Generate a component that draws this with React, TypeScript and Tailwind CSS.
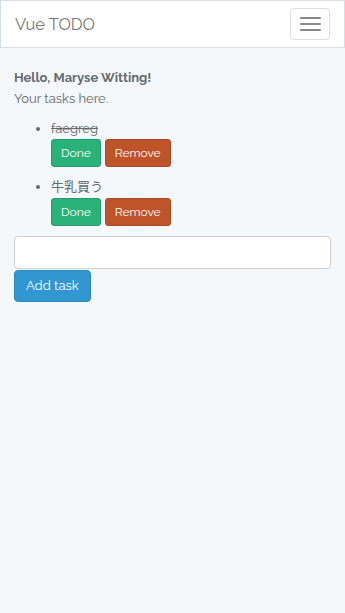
export default function App() {
  const font = { fontFamily: 'Raleway, Lato, "Noto Sans CJK JP", sans-serif' };
  const done = "h-[28px] px-[9px] bg-[#2ab27b] border border-[#259d6d] text-white text-[12px] rounded-[3px]";
  const rm = "h-[28px] px-[9px] bg-[#bf5329] border border-[#aa4a24] text-white text-[12px] rounded-[3px]";
  return (
    <div className="min-h-[613px] bg-[#f5f8fa] text-[#636b6f] text-[13px] leading-[1.6]" style={font}>
      <nav className="h-[48px] bg-white border border-[#d3e0e9] flex items-center justify-between pl-[14px] pr-[14px]">
        <span className="text-[16.5px] text-[#777777] leading-none">Vue TODO</span>
        <button className="w-[40px] h-[32px] border border-[#dddddd] rounded-[4px] flex flex-col items-center justify-center gap-[4px]">
          <span className="block w-[21px] h-[2px] bg-[#888888] rounded-[1px]" />
          <span className="block w-[21px] h-[2px] bg-[#888888] rounded-[1px]" />
          <span className="block w-[21px] h-[2px] bg-[#888888] rounded-[1px]" />
        </button>
      </nav>
      <div className="px-[14px] pt-[20px]">
        <div className="font-bold">Hello, Maryse Witting!</div>
        <div>Your tasks here.</div>
        <ul className="list-disc pl-[37px] mt-[9px]">
          <li className="mb-[10px]">
            <span className="line-through">faegreg</span>
            <div className="flex gap-[4px]">
              <button className={done}>Done</button>
              <button className={rm}>Remove</button>
            </div>
          </li>
          <li>
            <span>牛乳買う</span>
            <div className="flex gap-[4px]">
              <button className={done}>Done</button>
              <button className={rm}>Remove</button>
            </div>
          </li>
        </ul>
        <input className="mt-[10px] block w-full h-[33px] bg-white border border-[#ccd0d2] rounded-[4px] outline-none" />
        <button className="mt-[1px] h-[32px] px-[11px] bg-[#3097d1] border border-[#2a88bd] text-white text-[13px] rounded-[4px]">Add task</button>
      </div>
    </div>
  );
}
